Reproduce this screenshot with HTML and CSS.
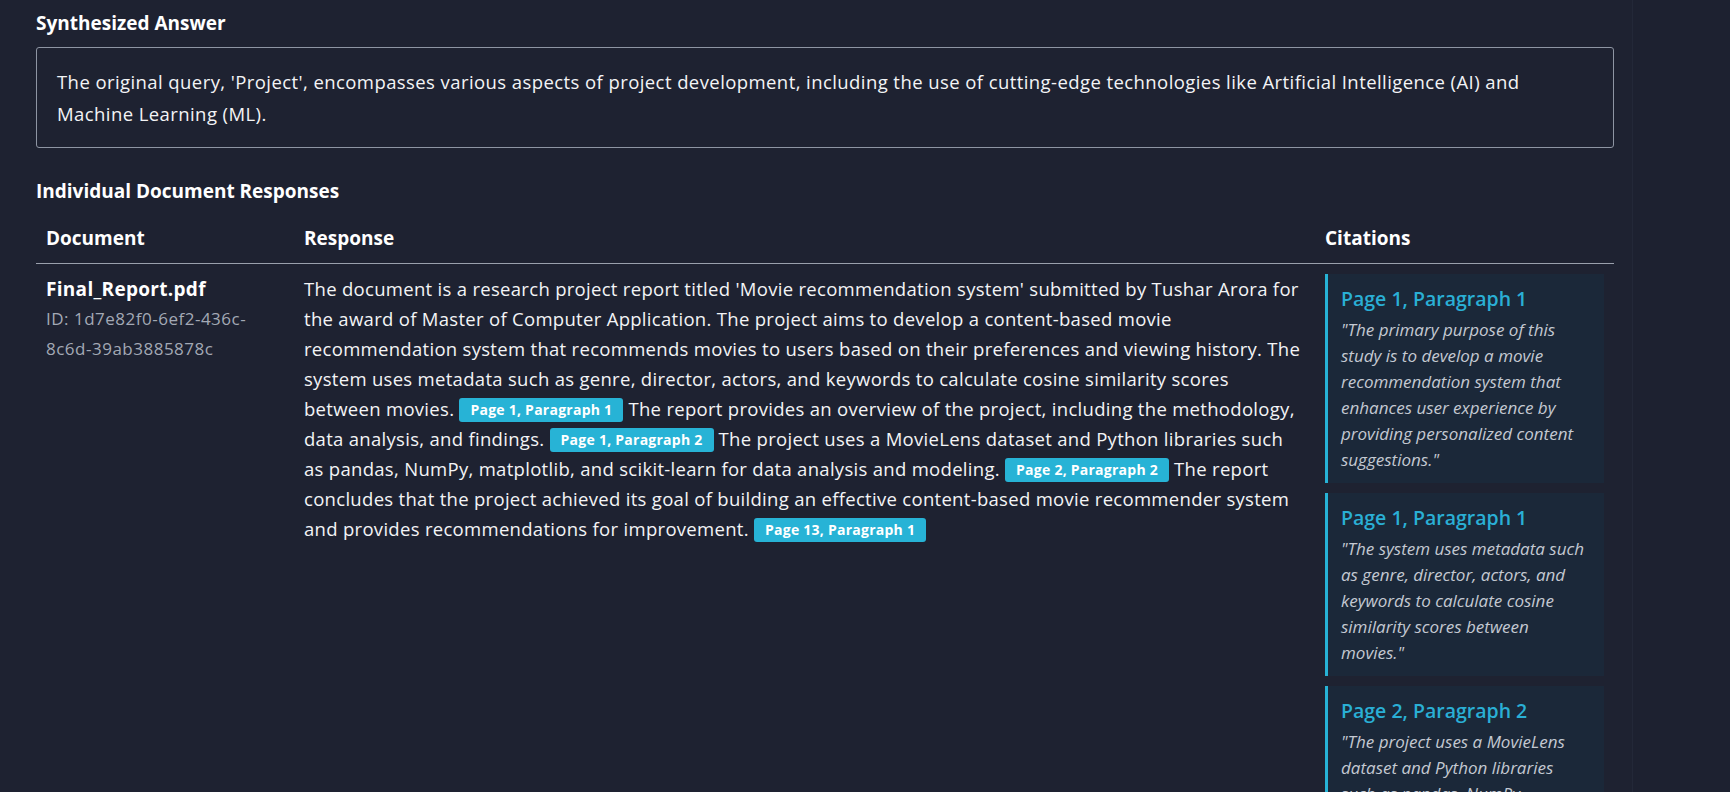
FILE: index.html
```html
<!DOCTYPE html>
<html lang="en">
<head>
<meta charset="utf-8">
<title>Query Results</title>
<link rel="stylesheet" href="styles.css">
</head>
<body>
<div class="app">
  <main class="main">
    <section class="results">
      <h3 class="section-title">Synthesized Answer</h3>
      <div class="answer-box">
        The original query, 'Project', encompasses various aspects of project development, including the use of cutting-edge technologies like Artificial Intelligence (AI) and Machine Learning (ML).
      </div>

      <h3 class="section-title section-title--spaced">Individual Document Responses</h3>
      <table class="doc-table">
        <colgroup>
          <col class="col-doc">
          <col class="col-resp">
          <col class="col-cite">
        </colgroup>
        <thead>
          <tr>
            <th>Document</th>
            <th>Response</th>
            <th>Citations</th>
          </tr>
        </thead>
        <tbody>
          <tr>
            <td class="doc-cell">
              <div class="doc-name">Final_Report.pdf</div>
              <div class="doc-id">ID: 1d7e82f0-6ef2-436c-8c6d-39ab3885878c</div>
            </td>
            <td class="resp-cell">
              The document is a research project report titled 'Movie recommendation system' submitted by Tushar Arora for the award of Master of Computer Application. The project aims to develop a content-based movie recommendation system that recommends movies to users based on their preferences and viewing history. The system uses metadata such as genre, director, actors, and keywords to calculate cosine similarity scores between movies. <span class="badge">Page 1, Paragraph 1</span> The report provides an overview of the project, including the methodology, data analysis, and findings. <span class="badge">Page 1, Paragraph 2</span> The project uses a MovieLens dataset and Python libraries such as pandas, NumPy, matplotlib, and scikit-learn for data analysis and modeling. <span class="badge">Page 2, Paragraph 2</span> The report concludes that the project achieved its goal of building an effective content-based movie recommender system and provides recommendations for improvement. <span class="badge">Page 13, Paragraph 1</span>
            </td>
            <td class="cite-cell">
              <div class="cite-card">
                <div class="cite-title">Page 1, Paragraph 1</div>
                <div class="cite-quote">"The primary purpose of this study is to develop a movie recommendation system that enhances user experience by providing personalized content suggestions."</div>
              </div>
              <div class="cite-card">
                <div class="cite-title">Page 1, Paragraph 1</div>
                <div class="cite-quote">"The system uses metadata such as genre, director, actors, and keywords to calculate cosine similarity scores between movies."</div>
              </div>
              <div class="cite-card">
                <div class="cite-title">Page 2, Paragraph 2</div>
                <div class="cite-quote">"The project uses a MovieLens dataset and Python libraries such as pandas, NumPy, matplotlib, and scikit-learn."</div>
              </div>
            </td>
          </tr>
        </tbody>
      </table>
    </section>
  </main>
  <aside class="side"></aside>
</div>
</body>
</html>
```

FILE: styles.css
```css
html, body {
  margin: 0;
  padding: 0;
  height: 100%;
  overflow: hidden;
}

body {
  background: #1e2231;
  color: #f3f4f6;
  font-family: "Open Sans", "Noto Sans", sans-serif;
  font-size: 18.5px;
}

.app {
  display: flex;
  height: 792px;
}

.main {
  width: 1632px;
  flex: none;
  border-right: 1px solid #232838;
  background: #1e2231;
}

.side {
  flex: 1;
  background: #1d2130;
}

.results {
  width: 1578px;
  padding: 10px 0 0 36px;
}

.section-title {
  margin: 0;
  font-size: 19px;
  line-height: 27px;
  font-weight: 700;
  color: #ffffff;
}

.section-title--spaced {
  margin-top: 30px;
}

.answer-box {
  margin-top: 10px;
  border: 1px solid #8e95a3;
  border-radius: 3px;
  padding: 18px 20px 17px;
  line-height: 32px;
  letter-spacing: 0.42px;
  color: #f3f4f6;
}

.doc-table {
  margin-top: 8px;
  width: 1578px;
  border-collapse: collapse;
  table-layout: fixed;
}

.col-doc { width: 258px; }
.col-resp { width: 1021px; }
.col-cite { width: 299px; }

.doc-table th {
  text-align: left;
  font-weight: 700;
  font-size: 19px;
  line-height: 27px;
  padding: 12px 10px 11px;
  border-bottom: 1px solid #9aa0ac;
  color: #ffffff;
}

.doc-table td {
  vertical-align: top;
  padding: 10px 10px;
}

.doc-name {
  font-size: 19px;
  font-weight: 700;
  letter-spacing: 0.3px;
  line-height: 30px;
  color: #ffffff;
}

.doc-id {
  font-size: 17px;
  letter-spacing: 0.5px;
  line-height: 30px;
  color: #a3a9b5;
}

.resp-cell {
  line-height: 30px;
  letter-spacing: 0.3px;
  color: #f3f4f6;
}

.badge {
  display: inline-block;
  background: #27b3d6;
  color: #ffffff;
  font-size: 14px;
  font-weight: 700;
  letter-spacing: 0.25px;
  line-height: 24px;
  padding: 0 11px;
  border-radius: 3px;
  vertical-align: 1px;
}

.cite-cell {
  padding-right: 11px;
}

.cite-card {
  background: #1b2839;
  border-left: 3px solid #27b3d6;
  padding: 10px 14px 10px 13px;
  margin-bottom: 10px;
}

.cite-title {
  color: #2aafd5;
  font-size: 19.5px;
  line-height: 30px;
  font-weight: 600;
  margin-bottom: 3px;
}

.cite-quote {
  font-style: italic;
  font-size: 17px;
  line-height: 26px;
  color: #c4c9d2;
}
```
